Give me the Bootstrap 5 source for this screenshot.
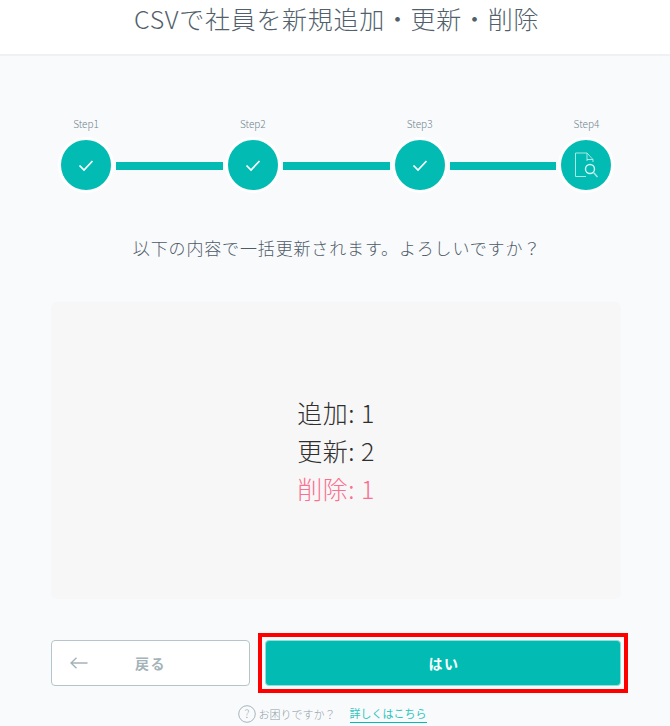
<!DOCTYPE html>
<html lang="ja"><head><meta charset="utf-8">
<link href="https://cdn.jsdelivr.net/npm/bootstrap@5.3.0/dist/css/bootstrap.min.css" rel="stylesheet">
<style>
html,body{height:726px;overflow:hidden}
body{background:#f9fafc;font-family:"Noto Sans CJK JP","Noto Sans",sans-serif;color:#5e6b78}
.topbar{height:56px;background:#fff;border-bottom:2px solid #eff1f4;font-size:25px;line-height:36px;color:#525f6c;letter-spacing:.7px;font-weight:300;padding-left:3px}
.stepper{padding:61px 56.500px 0 59px}
.stepitem{width:54px;flex:none}
.steplabel{font-size:10px;line-height:14px;color:#6f858d;height:21px;font-family:"Noto Sans CJK JP",sans-serif;font-weight:300}
.stepdot{width:54px;height:54px;border-radius:50%;background:#02bcb3;border:2px solid #fff;box-shadow:0 0 0 1px #fff}
.stepline{height:8px;background:#02bcb3;flex:1 1 auto;margin:45px 3px 0}
.question{font-size:17px;line-height:24px;color:#4f5b68;margin-top:44px;letter-spacing:.85px;font-weight:300;padding-left:4px}
.summary{margin:42px 49px 0 51px;height:297px;background:#f7f7f7;border-radius:6px;font-size:25px;line-height:38px;color:#2f2f2f;padding-bottom:1px;font-weight:300;letter-spacing:.5px}
.delrow{color:#fb6f90}
.actions{margin:41px 49px 0 51px;gap:15px}
.backbtn{width:199px;height:46px;background:#fff;border:1px solid #b5c6ca;border-radius:4px;color:#a3b3b8;font-size:14px;font-weight:700;padding:0 0 0 18px;letter-spacing:1.4px}
.backtext{margin-left:47px}
.frameyes{flex:1 1 auto;outline:4px solid #f00;outline-offset:3px;height:46px}
.yesbtn{width:100%;height:46px;background:#02bcb3;color:#fff;border:1px solid #8fdfda;border-radius:4px;font-size:14px;font-weight:700;padding:0 0 0 2px;letter-spacing:1.4px}
.helpline{margin-top:19px;font-size:11px;line-height:18px;color:#8e9ea6;gap:14px;font-weight:300;padding-right:6px}
.helpmark{width:18px;height:18px;flex:none;margin-right:3px}
.helplink{color:#2ec6bf;text-decoration:none;border-bottom:1px solid #02bcb3;font-weight:400;line-height:15px;padding-bottom:1px}
</style></head>
<body>
<header class="topbar text-center">CSVで社員を新規追加・更新・削除</header>
<main>
<div class="stepper d-flex align-items-start">
  <div class="stepitem text-center"><div class="steplabel">Step1</div><div class="stepdot d-flex align-items-center justify-content-center"><svg width="16" height="13" viewBox="0 0 16 13"><path d="M1.500 6.500 6 11 14.500 2" fill="none" stroke="#fff" stroke-width="1.700"/></svg></div></div>
  <div class="stepline"></div>
  <div class="stepitem text-center"><div class="steplabel">Step2</div><div class="stepdot d-flex align-items-center justify-content-center"><svg width="16" height="13" viewBox="0 0 16 13"><path d="M1.500 6.500 6 11 14.500 2" fill="none" stroke="#fff" stroke-width="1.700"/></svg></div></div>
  <div class="stepline"></div>
  <div class="stepitem text-center"><div class="steplabel">Step3</div><div class="stepdot d-flex align-items-center justify-content-center"><svg width="16" height="13" viewBox="0 0 16 13"><path d="M1.500 6.500 6 11 14.500 2" fill="none" stroke="#fff" stroke-width="1.700"/></svg></div></div>
  <div class="stepline"></div>
  <div class="stepitem text-center"><div class="steplabel">Step4</div><div class="stepdot d-flex align-items-center justify-content-center"><svg width="24" height="26" viewBox="0 0 24 26" fill="none" stroke="#a8e8e4" stroke-width="1"><path d="M13 9V1H1.500V24.500H12"/><path d="M13 1 19 7.500V10"/><path d="M13 7.500H19"/><circle cx="16" cy="17" r="4.500" stroke="#d8f5f3" stroke-width="1.400"/><path d="M19.500 20.500 23.500 25" stroke-width="1.400"/></svg></div></div>
</div>
<p class="question text-center mb-0">以下の内容で一括更新されます。よろしいですか？</p>
<section class="summary d-flex flex-column align-items-center justify-content-center">
  <div>追加: 1</div><div>更新: 2</div><div class="delrow">削除: 1</div>
</section>
<div class="actions d-flex">
  <button class="backbtn d-flex align-items-center" type="button"><svg width="18" height="12" viewBox="0 0 18 12" fill="none" stroke="#a3b3b8" stroke-width="1.400"><path d="M17.500 6H1M6.500 .8 1 6l5.500 5.200"/></svg><span class="backtext">戻る</span></button>
  <div class="frameyes"><button class="yesbtn" type="button">はい</button></div>
</div>
<div class="helpline d-flex justify-content-center align-items-center">
  <div class="d-flex align-items-center"><svg class="helpmark" viewBox="0 0 18 18" fill="none"><circle cx="9" cy="9" r="8.300" stroke="#a6b5ba" stroke-width="1"/><text x="9" y="13" text-anchor="middle" font-size="11" fill="#93a4ab" stroke="none">?</text></svg><span>お困りですか？</span></div>
  <a class="helplink" href="#">詳しくはこちら</a>
</div>
</main>
</body></html>
